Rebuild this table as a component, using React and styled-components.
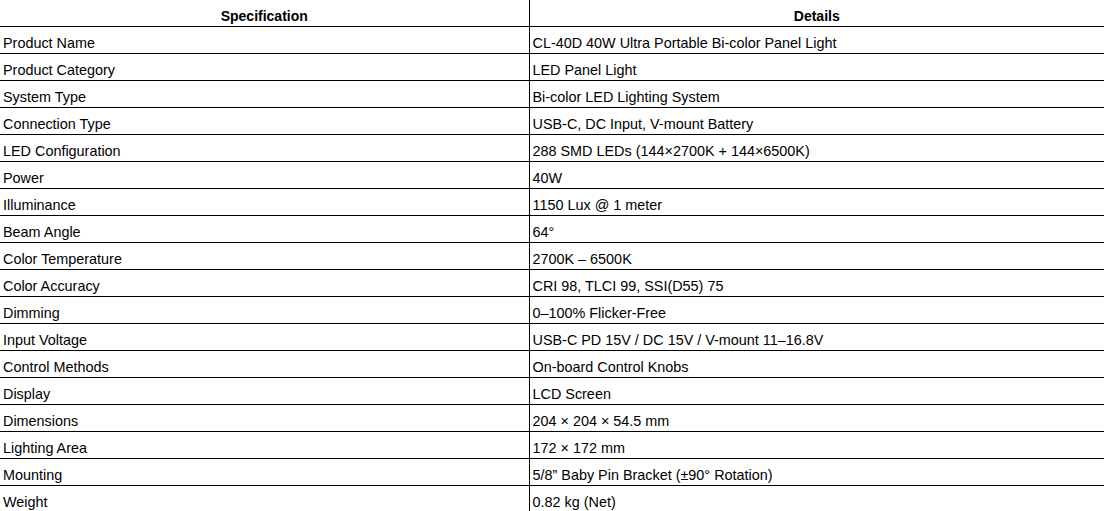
import React from "react";
import styled, { createGlobalStyle } from "styled-components";

const Global = createGlobalStyle`
  html, body { margin: 0; padding: 0; background: #fff; }
  body { font-family: Arial, "Liberation Sans", sans-serif; color: #000; }
`;

const Table = styled.table`
  width: 1104px;
  border-collapse: collapse;
  table-layout: fixed;
  line-height: 16px;
`;

const Th = styled.th`
  box-sizing: border-box;
  font-size: 14px;
  font-weight: bold;
  text-align: center;
  padding: 8px 2px 2px;
  border-bottom: 1px solid #000;
  border-right: ${(p) => (p.$first ? "1px solid #000" : "none")};
  width: ${(p) => (p.$first ? "529px" : "auto")};
`;

const Td = styled.td`
  font-size: 14.4px;
  text-align: left;
  padding: 8px 3px 2px;
  border-bottom: 1px solid #000;
  border-right: ${(p) => (p.$first ? "1px solid #000" : "none")};
  white-space: nowrap;
`;

const rows = [
  ["Product Name", "CL-40D 40W Ultra Portable Bi-color Panel Light"],
  ["Product Category", "LED Panel Light"],
  ["System Type", "Bi-color LED Lighting System"],
  ["Connection Type", "USB-C, DC Input, V-mount Battery"],
  ["LED Configuration", "288 SMD LEDs (144×2700K + 144×6500K)"],
  ["Power", "40W"],
  ["Illuminance", "1150 Lux @ 1 meter"],
  ["Beam Angle", "64°"],
  ["Color Temperature", "2700K – 6500K"],
  ["Color Accuracy", "CRI 98, TLCI 99, SSI(D55) 75"],
  ["Dimming", "0–100% Flicker-Free"],
  ["Input Voltage", "USB-C PD 15V / DC 15V / V-mount 11–16.8V"],
  ["Control Methods", "On-board Control Knobs"],
  ["Display", "LCD Screen"],
  ["Dimensions", "204 × 204 × 54.5 mm"],
  ["Lighting Area", "172 × 172 mm"],
  ["Mounting", "5/8\u201D Baby Pin Bracket (±90° Rotation)"],
  ["Weight", "0.82 kg (Net)"],
];

export default function App() {
  return (
    <>
      <Global />
      <Table>
        <thead>
          <tr>
            <Th $first>Specification</Th>
            <Th>Details</Th>
          </tr>
        </thead>
        <tbody>
          {rows.map(([k, v]) => (
            <tr key={k}>
              <Td $first>{k}</Td>
              <Td>{v}</Td>
            </tr>
          ))}
        </tbody>
      </Table>
    </>
  );
}
